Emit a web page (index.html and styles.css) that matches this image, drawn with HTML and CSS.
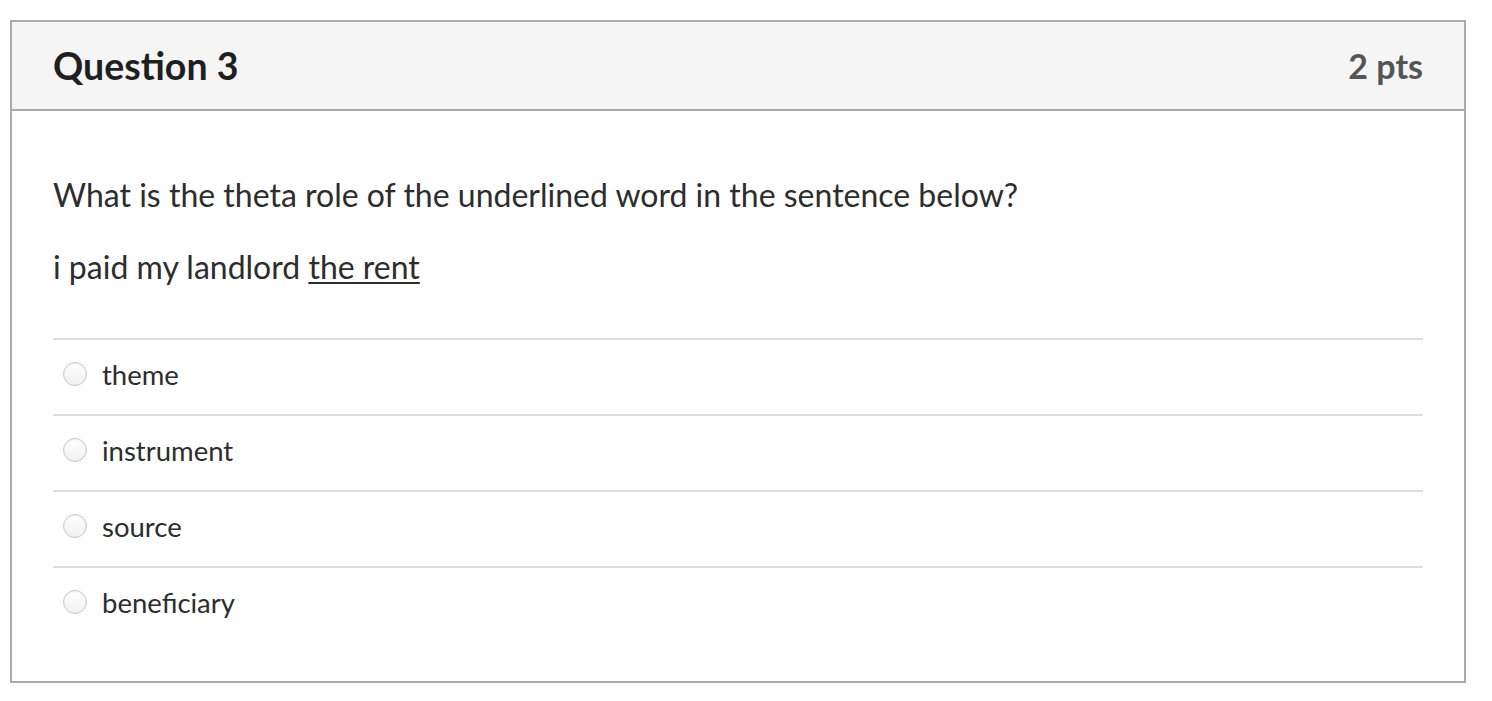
FILE: index.html
```html
<!DOCTYPE html>
<html>
<head>
<meta charset="utf-8">
<link rel="stylesheet" href="styles.css">
</head>
<body>
<div class="question">
  <div class="header">
    <h2 class="title">Question 3</h2>
    <div class="pts">2 pts</div>
  </div>
  <div class="content">
    <p class="text">What is the theta role of the underlined word in the sentence below?</p>
    <p class="text">i paid my landlord <u>the rent</u></p>
    <div class="answers">
      <label class="answer"><span class="radio"></span><span class="label">theme</span></label>
      <label class="answer"><span class="radio"></span><span class="label">instrument</span></label>
      <label class="answer"><span class="radio"></span><span class="label">source</span></label>
      <label class="answer"><span class="radio"></span><span class="label">beneficiary</span></label>
    </div>
  </div>
</div>
</body>
</html>
```
FILE: styles.css
```css
html, body {
  margin: 0;
  padding: 0;
  background: #fff;
}
body {
  font-family: Lato, "Noto Sans", sans-serif;
  color: #2d3b45;
}
.question {
  margin: 20px 0 0 10px;
  width: 1452px;
  border: 2px solid #aaaaaa;
}
.header {
  display: flex;
  justify-content: space-between;
  align-items: center;
  height: 87px;
  padding: 0 41px;
  background: #f5f5f5;
  border-bottom: 2px solid #aaaaaa;
}
.title {
  margin: 0;
  font-size: 37.5px;
  font-weight: 700;
  color: #1f1f1f;
}
.pts {
  font-size: 34px;
  font-weight: 700;
  color: #555;
}
.content {
  padding: 63px 41px 39px;
}
.text {
  margin: 0 0 30px;
  font-size: 32px;
  line-height: 42px;
  color: #2d2d2d;
}
.text u {
  text-decoration-thickness: 2px;
  text-underline-offset: 3px;
}
.answers {
  margin-top: 50px;
}
.answer {
  display: flex;
  align-items: center;
  box-sizing: border-box;
  height: 76px;
  padding-bottom: 6px;
  border-top: 2px solid #dddddd;
}
.radio {
  width: 22px;
  height: 22px;
  margin-left: 10px;
  margin-right: 15px;
  border-radius: 50%;
  border: 1px solid #c8c8c8;
  background: linear-gradient(#ffffff, #f0f0f0);
  box-shadow: inset 0 1px 2px rgba(0,0,0,0.06);
}
.label {
  font-size: 27.5px;
  color: #2d2d2d;
}
```
